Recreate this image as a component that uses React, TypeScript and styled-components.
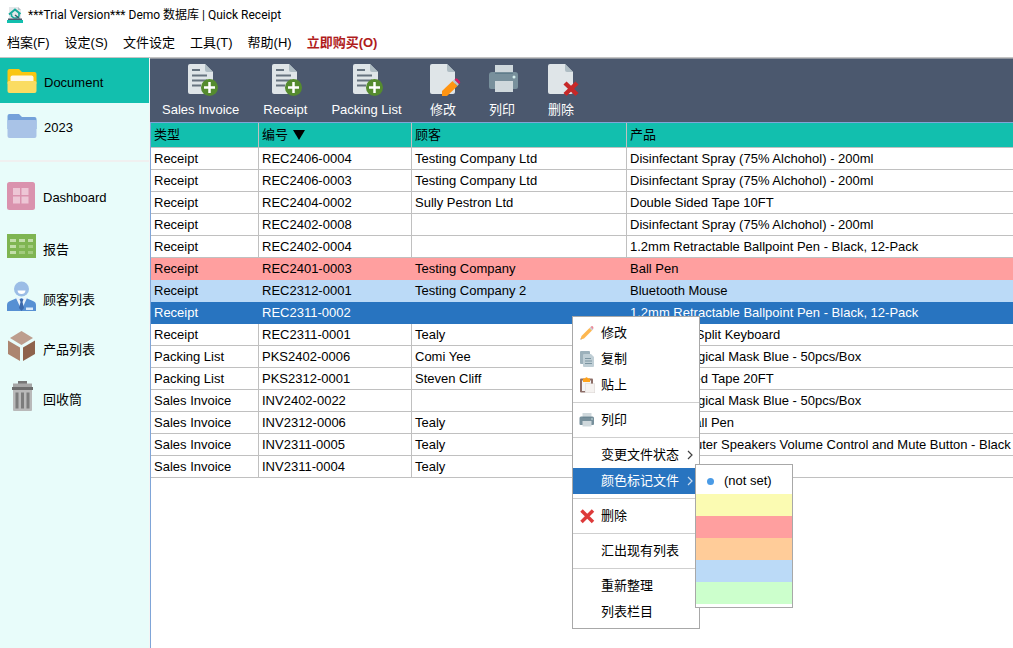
import React from 'react';
import styled, { createGlobalStyle, css } from 'styled-components';

const teal = '#12bfae';
const slate = '#4b586e';
const selected = '#2874c0';
const line = '#c0c0c0';

const GlobalStyle = createGlobalStyle`
  *, *::before, *::after { box-sizing: border-box; }
  body {
    margin: 0;
    background: #fff;
    color: #000;
    font: 13px/16px "Liberation Sans", "Noto Sans CJK SC", sans-serif;
    overflow: hidden;
  }
  button { font: inherit; color: inherit; border: 0; background: none; padding: 0; cursor: default; }
`;

const Window = styled.div`
  display: flex;
  flex-direction: column;
  height: 100vh;
  overflow: hidden;
`;

const TitleBar = styled.header`
  display: flex;
  align-items: center;
  gap: 5px;
  height: 30px;
  flex: none;
  padding-left: 7px;
  font-family: Roboto, "Noto Sans CJK SC", sans-serif;
  font-size: 12px;
`;

const Title = styled.h1`
  margin: 0;
  font-size: inherit;
  font-weight: 400;
`;

const MenuBar = styled.nav`
  display: flex;
  align-items: center;
  gap: 15px;
  height: 28px;
  flex: none;
  padding: 0 7px 1px;
  border-bottom: 1px solid #c4c4c4;
`;

const MenuBarButton = styled.button<{ $accent?: boolean }>`
  white-space: nowrap;
  ${p => p.$accent && css`color: #b01c1c; font-weight: 700;`}
`;

const Body = styled.div`
  display: flex;
  flex: 1;
  min-height: 0;
`;

const Sidebar = styled.aside`
  width: 150px;
  flex: none;
  background: #e8fcfa;
  border-right: 1px solid #f4f4f4;
`;

const FolderGroup = styled.div`
  height: 104px;
  border-bottom: 2px solid #f0f0f0;
`;

const LinkGroup = styled.div`
  padding-top: 9px;
`;

const SideButton = styled.button<{ $active?: boolean; $folder?: boolean }>`
  display: flex;
  align-items: center;
  gap: 7px;
  width: 100%;
  height: ${p => (p.$folder ? 45 : 50)}px;
  padding-left: ${p => (p.$folder ? 7 : 6)}px;
  background: ${p => (p.$active ? teal : 'transparent')};
  text-align: left;
`;

const SideLabel = styled.span<{ $drop: number }>`
  padding-top: ${p => p.$drop}px;
`;

const Content = styled.main`
  display: flex;
  flex-direction: column;
  flex: 1;
  min-width: 0;
`;

const Toolbar = styled.div`
  display: flex;
  align-items: flex-start;
  gap: 24px;
  height: 64px;
  flex: none;
  padding: 5px 12px 0;
  background: ${slate};
  border-top: 1px solid #8f959e;
  color: #fff;
`;

const ToolButton = styled.button`
  display: flex;
  flex-direction: column;
  align-items: center;
  gap: 6px;
  min-width: 35px;
  white-space: nowrap;
`;

const Grid = styled.div`
  flex: 1;
  min-height: 0;
  overflow: hidden;
  border-top: 1px solid #7fa5d8;
  border-left: 1px solid #7fa5d8;
`;

const Table = styled.table`
  width: 100%;
  table-layout: fixed;
  border-collapse: separate;
  border-spacing: 0;
`;

const Head = styled.th`
  height: 25px;
  padding: 0 3px;
  background: ${teal};
  border-bottom: 1px solid ${line};
  border-right: 1px solid ${line};
  font-weight: 400;
  text-align: left;
  white-space: nowrap;
  &:last-child { border-right: 0; }
`;

const SortButton = styled.button`
  display: flex;
  align-items: center;
  gap: 5px;
`;

type Tone = 'red' | 'blue' | 'selected';
const tones = { red: '#ff9f9f', blue: '#bbdaf7', selected };

const Row = styled.tr<{ $tone?: Tone }>`
  ${p => p.$tone && css`
    background: ${tones[p.$tone]};
    color: ${p.$tone === 'selected' ? '#fff' : '#000'};
    td { border-color: transparent; }
  `}
`;

const Cell = styled.td`
  height: 22px;
  padding: 0 3px;
  border-bottom: 1px solid ${line};
  border-right: 1px solid ${line};
  white-space: nowrap;
  overflow: hidden;
  &:last-child { border-right: 0; }
`;

const Popup = styled.div<{ $x: number; $y: number; $w: number }>`
  position: absolute;
  left: ${p => p.$x}px;
  top: ${p => p.$y}px;
  width: ${p => p.$w}px;
  padding: 3px 0;
  background: #fff;
  border: 1px solid #a8a8a8;
`;

const MenuItem = styled.button<{ $active?: boolean }>`
  display: grid;
  grid-template-columns: 16px 1fr 8px;
  column-gap: 6px;
  align-items: center;
  width: 100%;
  height: 26px;
  padding: 0 5px 0 6px;
  text-align: left;
  white-space: nowrap;
  background: ${p => (p.$active ? selected : 'transparent')};
  color: ${p => (p.$active ? '#fff' : '#000')};
`;

const Separator = styled.hr`
  height: 1px;
  margin: 4px 0;
  border: 0;
  background: #cfcfcf;
`;

const Swatch = styled.button<{ $color: string }>`
  display: block;
  width: 100%;
  height: 22px;
  background: ${p => p.$color};
`;

const Icon = styled.svg`
  display: block;
  flex: none;
  overflow: visible;
`;

const AppLogo = () => (
  <Icon width="16" height="16" viewBox="0 0 16 16">
    <path d="M2 0h9l3 3v10H2z" fill="#e4e8ea" />
    <path d="M11 0l3 3h-3z" fill="#b9c3c8" />
    <path d="M2 7.500L8 2.500l5.500 4.500" fill="none" stroke="#16a99b" strokeWidth="2" />
    <path d="M4.500 6.500v2.500L7 11h3l2-2V6" fill="none" stroke="#16a99b" strokeWidth="1.600" />
    <path d="M8 8l4.500 3.500" stroke="#35606b" strokeWidth="1.500" />
    <path d="M1 11.500h14V13H1z" fill="#4b586e" />
    <path d="M0 13h16v3H0z" fill="#12bfae" />
  </Icon>
);

const Folder = ({ open }: { open?: boolean }) => (
  <Icon width="30" height="26" viewBox="0 0 30 26">
    <path d="M2.500 1H12l3 3h12.500q2 0 2 2v10H.5V3q0-2 2-2z" fill={open ? '#f9c611' : '#74a1da'} />
    {open && <path d="M5.500 7.500h19q2 0 2 2V15h-23V9.500q0-2 2-2z" fill="#fff8e4" />}
    <path
      d={open
        ? 'M2 13h26q1.500 0 1.500 1.500V23q0 2-2 2h-25q-2 0-2-2v-8.500Q.5 13 2 13z'
        : 'M.5 8Q.5 7 2 7h26q1.500 0 1.500 1v15q0 2-2 2h-25q-2 0-2-2z'}
      fill={open ? '#fadc62' : '#a9c3e7'}
    />
  </Icon>
);

const DashboardIcon = () => (
  <Icon width="30" height="30" viewBox="0 0 30 30">
    <rect x="1" y="1" width="28" height="28" rx="2.500" fill="#da93ae" />
    <path d="M7 7h7v7H7zM15.500 7h7v7h-7zM7 15.500h7v7H7zM15.500 15.500h7v7h-7z" fill="#edc6d5" />
  </Icon>
);

const ReportIcon = () => (
  <Icon width="30" height="26" viewBox="0 0 30 26">
    <rect x="1" y="1" width="29" height="24" fill="#7fb552" />
    <path d="M4 6h6v3H4zM13 6h6v3h-6zM22 6h5v3h-5zM4 12h6v3H4zM4 18h6v3H4z" fill="#c3deaa" />
    <path d="M13 12h6v3h-6zM22 12h5v3h-5zM13 18h6v3h-6zM22 18h5v3h-5z" fill="#a2cb7e" />
  </Icon>
);

const CustomerIcon = () => (
  <Icon width="30" height="30" viewBox="0 0 30 30">
    <circle cx="15.500" cy="8" r="7.500" fill="#9bbde6" />
    <path d="M11.500 9.500h8q-.5 3.500-4 3.500t-4-3.500z" fill="#fff" />
    <path d="M1 30v-6q0-3 3-4l7-3h9l7 3q3 1 3 4v6z" fill="#5790d3" />
    <path d="M10 17l5.500 12L21 17l-2-1-3.500 2-3.500-2z" fill="#eaf3fc" />
    <path d="M13.500 18h4l-1 3 1.500 6-2.500 3-2.500-3 1.500-6z" fill="#3c69ac" />
    <path d="M20 26.500h7V29h-7z" fill="#dceafa" />
  </Icon>
);

const BoxIcon = () => (
  <Icon width="30" height="30" viewBox="0 0 30 30">
    <path d="M15.500 0L27 7l-11.500 7L4 7z" fill="#bd9e8e" />
    <path d="M2 9.500L14 16.500V30L2 23z" fill="#ac8570" />
    <path d="M29 9.500L17 16.500V30L29 23z" fill="#8e634c" />
  </Icon>
);

const TrashIcon = () => (
  <Icon width="30" height="30" viewBox="0 0 30 30">
    <path d="M12 0h9v3h-9z" fill="#777" />
    <path d="M7 2.500h19V6H7z" fill="#a6a6a6" />
    <path d="M6 6h21v3H6z" fill="#6d6d6d" />
    <path d="M7 9h19v20q0 1-1 1H8q-1 0-1-1z" fill="#b9b9b9" />
    <path d="M9.500 11.500h3v16h-3zM15 11.500h3v16h-3zM20.500 11.500h3v16h-3z" fill="#7c7c7c" />
  </Icon>
);

const Sheet = () => (
  <>
    <path d="M6 0h15l8 8v20q0 2-2 2H6q-2 0-2-2V2q0-2 2-2z" fill="#dfe5e8" />
    <path d="M21 0l8 8h-6q-2 0-2-2z" fill="#aebcc3" />
  </>
);

const AddDocIcon = () => (
  <Icon width="34" height="32" viewBox="0 0 34 32">
    <Sheet />
    <path d="M8 6h8M8 11.500h15M8 16.500h15M8 21.500h9" stroke="#66737f" strokeWidth="2" />
    <circle cx="25.500" cy="23.500" r="8.500" fill="#558b2f" />
    <path d="M20 23.500h11M25.500 18v11" stroke="#fff" strokeWidth="2.500" />
  </Icon>
);

const EditIcon = () => (
  <Icon width="34" height="32" viewBox="0 0 34 32">
    <Sheet />
    <path d="M16 32v-5l10.500-10 5 5L21 32z" fill="#ff9412" />
    <path d="M26.500 17l2-1.500 4.500 4.500-1.500 2z" fill="#b9c5cb" />
    <path d="M28.500 15.500l.8-.8q1-1 2 0l2.500 2.500q1 1 0 2l-.8.8z" fill="#d81b60" />
  </Icon>
);

const DeleteIcon = () => (
  <Icon width="34" height="32" viewBox="0 0 34 32">
    <Sheet />
    <path d="M21 19l12 11.500M33 19l-12 11.500" stroke="#c62828" strokeWidth="4.500" />
  </Icon>
);

const PrintIcon = ({ small }: { small?: boolean }) => (
  <Icon width={small ? 16 : 34} height={small ? 16 : 32} viewBox={small ? '3 -1 32 32' : '0 0 34 32'}>
    <path d="M10 1h18v8H10z" fill="#cfd8dc" />
    <path d="M7 8h23q3 0 3 3v12q0 2-2 2H6q-2 0-2-2V11q0-3 3-3z" fill="#78909c" />
    <path d="M10 9h18v1H10z" fill="#607d8b" />
    <path d="M10 17h18v11H10z" fill="#cfd8dc" />
    <circle cx="29" cy="13" r="1.500" fill="#d6f0ee" />
  </Icon>
);

const PencilIcon = () => (
  <Icon width="16" height="16" viewBox="0 0 16 16">
    <path d="M1.500 14.500l1-3.500 8-8 2.500 2.500-8 8z" fill="#fdb750" />
    <path d="M10.500 3l1-1L14 4.500l-1 1z" fill="#c3cdd2" />
    <path d="M11.500 2q1.500-1.500 2.500-.5t0 3z" fill="#e98a98" />
    <path d="M1.500 14.500l.3-1.200.9.900z" fill="#8a7a68" />
  </Icon>
);

const CopyIcon = () => (
  <Icon width="16" height="16" viewBox="0 0 16 16">
    <rect x="1" y="0" width="10" height="13" rx="1" fill="#9db1bb" />
    <path d="M5 3h7l3 3v9q0 1-1 1H5q-1 0-1-1V4q0-1 1-1z" fill="#bfced5" />
    <path d="M6 7.500h6M6 10h7M6 12.500h7" stroke="#7c95a1" />
  </Icon>
);

const PasteIcon = () => (
  <Icon width="16" height="16" viewBox="0 0 16 16">
    <rect x="1" y="1.500" width="13" height="14" rx="1" fill="#8d6e68" />
    <path d="M3 3.500h9V14H3z" fill="#f4f4f4" />
    <path d="M4 1.500h2q1.500-2.500 3 0h2V5H4z" fill="#ffa21a" />
    <path d="M6 6.500h10V16H6z" fill="#d9d4d1" />
    <path d="M6.500 7h9v8.500h-9z" fill="#f5f2f0" />
  </Icon>
);

const CrossIcon = () => (
  <Icon width="16" height="16" viewBox="0 0 16 16">
    <path d="M2.500 2.500l11.500 11.500M14 2.500l-11.500 11.500" stroke="#dd3b3b" strokeWidth="3.500" />
  </Icon>
);

const Chevron = () => (
  <Icon width="8" height="10" viewBox="0 0 8 10">
    <path d="M2 1l4 4-4 4" fill="none" stroke="currentColor" strokeOpacity=".75" strokeWidth="1.200" />
  </Icon>
);

const Dot = () => (
  <Icon width="16" height="16" viewBox="0 0 16 16">
    <circle cx="8.500" cy="8.500" r="3.500" fill="#4a9be6" />
  </Icon>
);

const SortArrow = () => (
  <Icon width="12" height="10" viewBox="0 0 12 10">
    <path d="M0 0h12L6 10z" />
  </Icon>
);

const tools = [
  { label: 'Sales Invoice', icon: <AddDocIcon /> },
  { label: 'Receipt', icon: <AddDocIcon /> },
  { label: 'Packing List', icon: <AddDocIcon /> },
  { label: '修改', icon: <EditIcon /> },
  { label: '列印', icon: <PrintIcon /> },
  { label: '删除', icon: <DeleteIcon /> },
];

const links = [
  { label: 'Dashboard', icon: <DashboardIcon />, drop: 3 },
  { label: '报告', icon: <ReportIcon />, drop: 7 },
  { label: '顾客列表', icon: <CustomerIcon />, drop: 7 },
  { label: '产品列表', icon: <BoxIcon />, drop: 7 },
  { label: '回收筒', icon: <TrashIcon />, drop: 7 },
];

const rows: { cells: [string, string, string, string]; tone?: Tone }[] = [
  { cells: ['Receipt', 'REC2406-0004', 'Testing Company Ltd', 'Disinfectant Spray (75% Alchohol) - 200ml'] },
  { cells: ['Receipt', 'REC2406-0003', 'Testing Company Ltd', 'Disinfectant Spray (75% Alchohol) - 200ml'] },
  { cells: ['Receipt', 'REC2404-0002', 'Sully Pestron Ltd', 'Double Sided Tape 10FT'] },
  { cells: ['Receipt', 'REC2402-0008', '', 'Disinfectant Spray (75% Alchohol) - 200ml'] },
  { cells: ['Receipt', 'REC2402-0004', '', '1.2mm Retractable Ballpoint Pen - Black, 12-Pack'] },
  { cells: ['Receipt', 'REC2401-0003', 'Testing Company', 'Ball Pen'], tone: 'red' },
  { cells: ['Receipt', 'REC2312-0001', 'Testing Company 2', 'Bluetooth Mouse'], tone: 'blue' },
  { cells: ['Receipt', 'REC2311-0002', '', '1.2mm Retractable Ballpoint Pen - Black, 12-Pack'], tone: 'selected' },
  { cells: ['Receipt', 'REC2311-0001', 'Tealy', 'Ergonomic Split Keyboard'] },
  { cells: ['Packing List', 'PKS2402-0006', 'Comi Yee', '3-Layer Surgical Mask Blue - 50pcs/Box'] },
  { cells: ['Packing List', 'PKS2312-0001', 'Steven Cliff', 'Double Sided Tape 20FT'] },
  { cells: ['Sales Invoice', 'INV2402-0022', '', '3-Layer Surgical Mask Blue - 50pcs/Box'] },
  { cells: ['Sales Invoice', 'INV2312-0006', 'Tealy', 'Premium Ball Pen'] },
  { cells: ['Sales Invoice', 'INV2311-0005', 'Tealy', 'USB Computer Speakers Volume Control and Mute Button - Black'] },
  { cells: ['Sales Invoice', 'INV2311-0004', 'Tealy', ''] },
];

const swatches = [
  { name: 'Yellow', color: '#fbfbb2' },
  { name: 'Red', color: '#ff9f9f' },
  { name: 'Orange', color: '#ffcc99' },
  { name: 'Blue', color: '#bbdaf7' },
  { name: 'Green', color: '#ccffcc' },
];

const Item = ({ label, icon, sub, active }: { label: string; icon?: React.ReactNode; sub?: boolean; active?: boolean }) => (
  <MenuItem role="menuitem" $active={active} aria-haspopup={sub ? 'menu' : undefined}>
    <span>{icon}</span>
    <span>{label}</span>
    {sub && <Chevron />}
  </MenuItem>
);

export default function App() {
  return (
    <Window>
      <GlobalStyle />
      <TitleBar>
        <AppLogo />
        <Title>***Trial Version*** Demo 数据库 | Quick Receipt</Title>
      </TitleBar>
      <MenuBar>
        {['档案(F)', '设定(S)', '文件设定', '工具(T)', '帮助(H)'].map(m => (
          <MenuBarButton key={m}>{m}</MenuBarButton>
        ))}
        <MenuBarButton $accent>立即购买(O)</MenuBarButton>
      </MenuBar>
      <Body>
        <Sidebar>
          <FolderGroup>
            <SideButton $folder $active><Folder open /><SideLabel $drop={5}>Document</SideLabel></SideButton>
            <SideButton $folder><Folder /><SideLabel $drop={5}>2023</SideLabel></SideButton>
          </FolderGroup>
          <LinkGroup>
            {links.map(l => (
              <SideButton key={l.label}>{l.icon}<SideLabel $drop={l.drop}>{l.label}</SideLabel></SideButton>
            ))}
          </LinkGroup>
        </Sidebar>
        <Content>
          <Toolbar>
            {tools.map(t => (
              <ToolButton key={t.label}>{t.icon}<span>{t.label}</span></ToolButton>
            ))}
          </Toolbar>
          <Grid>
            <Table>
              <colgroup>
                <col width="108" />
                <col width="153" />
                <col width="215" />
                <col />
              </colgroup>
              <thead>
                <tr>
                  <Head>类型</Head>
                  <Head aria-sort="descending"><SortButton>编号<SortArrow /></SortButton></Head>
                  <Head>顾客</Head>
                  <Head>产品</Head>
                </tr>
              </thead>
              <tbody>
                {rows.map(r => (
                  <Row key={r.cells[1]} $tone={r.tone}>
                    {r.cells.map((c, i) => <Cell key={i}>{c}</Cell>)}
                  </Row>
                ))}
              </tbody>
            </Table>
          </Grid>
        </Content>
      </Body>
      <Popup role="menu" $x={572} $y={316} $w={128}>
        <Item label="修改" icon={<PencilIcon />} />
        <Item label="复制" icon={<CopyIcon />} />
        <Item label="贴上" icon={<PasteIcon />} />
        <Separator />
        <Item label="列印" icon={<PrintIcon small />} />
        <Separator />
        <Item label="变更文件状态" sub />
        <Item label="颜色标记文件" sub active />
        <Separator />
        <Item label="删除" icon={<CrossIcon />} />
        <Separator />
        <Item label="汇出现有列表" />
        <Separator />
        <Item label="重新整理" />
        <Item label="列表栏目" />
      </Popup>
      <Popup role="menu" $x={695} $y={464} $w={98}>
        <Item label="(not set)" icon={<Dot />} />
        {swatches.map(s => <Swatch key={s.name} role="menuitem" aria-label={s.name} $color={s.color} />)}
      </Popup>
    </Window>
  );
}
